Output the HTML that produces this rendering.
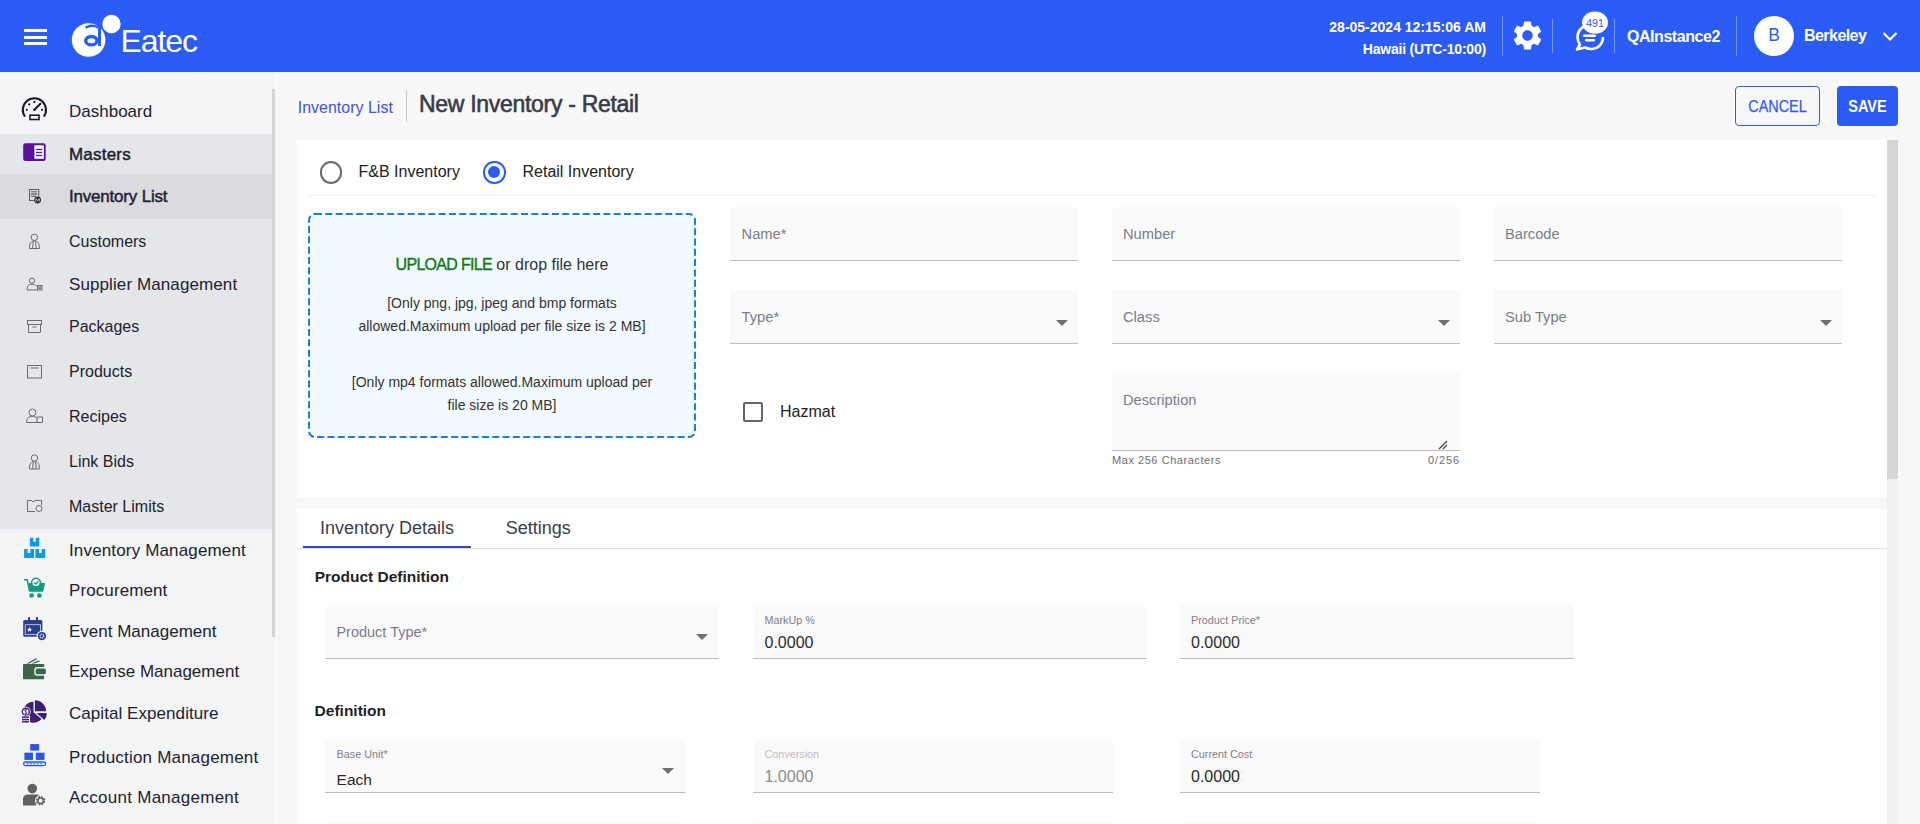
<!DOCTYPE html>
<html><head><meta charset="utf-8">
<style>
*{margin:0;padding:0;box-sizing:border-box}
html,body{width:1920px;height:824px;overflow:hidden;background:#f8f8f8;font-family:"Liberation Sans",sans-serif}
.a{position:absolute;white-space:nowrap}
#hdr{position:absolute;left:0;top:0;width:1920px;height:72px;background:#2c5cf6}
#side{position:absolute;left:0;top:72px;width:275px;height:752px;background:#f3f4f6}
.w{color:#fff}
.vd{position:absolute;width:1px;background:rgba(255,255,255,.35)}
.si{position:absolute;left:69px;font-size:17px;line-height:17px;color:#22222e;white-space:nowrap}
.card{position:absolute;background:#fff}
.fld{position:absolute;background:#fafafa;border-radius:4px 4px 0 0;border-bottom:1px solid #bcbdc3}
.lbl{position:absolute;font-size:14.7px;line-height:15px;color:#7a7d88;white-space:nowrap}
.slbl{position:absolute;font-size:10.8px;line-height:10.8px;color:#7c7f8a;white-space:nowrap}
.val{position:absolute;font-size:16px;line-height:16px;color:#2a2a2a;white-space:nowrap}
.arr{position:absolute;width:0;height:0;border-left:6px solid transparent;border-right:6px solid transparent;border-top:6px solid #707070}
</style></head><body>
<div id="hdr">
  <div class="a" style="left:24px;top:29px;width:23px;height:3px;background:#fff"></div>
  <div class="a" style="left:24px;top:35.5px;width:23px;height:3px;background:#fff"></div>
  <div class="a" style="left:24px;top:42px;width:23px;height:3px;background:#fff"></div>
  <svg class="a" style="left:66px;top:8px" width="60" height="54" viewBox="0 0 60 54">
    <circle cx="22.6" cy="32" r="16.8" fill="#fff"/>
    <circle cx="45.5" cy="16" r="9.2" fill="#fff"/>
    <ellipse cx="25.35" cy="32.7" rx="5.6" ry="4.2" fill="none" stroke="#2c5cf6" stroke-width="3.4"/>
    <rect x="32" y="19.5" width="3" height="18.5" fill="#2c5cf6"/>
    <path d="M19.6 19.8 Q26 15.6 33.8 20.2" fill="none" stroke="#2c5cf6" stroke-width="2.5"/>
  </svg>
  <div class="a w" style="left:120.5px;top:24.8px;font-size:32px;line-height:32px;letter-spacing:-1.1px">Eatec</div>
  <div class="a w" style="right:434px;top:20px;font-size:14px;line-height:14px;font-weight:bold">28-05-2024 12:15:06 AM</div>
  <div class="a w" style="right:434px;top:41.9px;font-size:14px;line-height:14px;font-weight:bold;letter-spacing:-0.2px">Hawaii (UTC-10:00)</div>
  <div class="vd" style="left:1502px;top:16px;height:40px"></div>
  <svg class="a" style="left:1510px;top:18px" width="35" height="35" viewBox="0 0 24 24"><path fill="#fff" d="M19.14,12.94c0.04-0.3,0.06-0.61,0.06-0.94c0-0.32-0.02-0.64-0.07-0.94l2.03-1.58c0.18-0.14,0.23-0.41,0.12-0.61l-1.92-3.32c-0.12-0.22-0.37-0.29-0.59-0.22l-2.39,0.96c-0.5-0.38-1.03-0.7-1.62-0.94L14.4,2.81c-0.04-0.24-0.24-0.41-0.48-0.41h-3.84c-0.24,0-0.43,0.17-0.47,0.41L9.25,5.35C8.66,5.59,8.12,5.92,7.63,6.29L5.24,5.33c-0.22-0.08-0.47,0-0.59,0.22L2.74,8.87C2.62,9.08,2.66,9.34,2.86,9.48l2.03,1.58C4.84,11.36,4.8,11.69,4.8,12s0.02,0.64,0.07,0.94l-2.03,1.58c-0.18,0.14-0.23,0.41-0.12,0.61l1.92,3.32c0.12,0.22,0.37,0.29,0.59,0.22l2.39-0.96c0.5,0.38,1.03,0.7,1.62,0.94l0.36,2.54c0.05,0.24,0.24,0.41,0.48,0.41h3.84c0.24,0,0.44-0.17,0.47-0.41l0.36-2.54c0.59-0.24,1.13-0.56,1.62-0.94l2.39,0.96c0.22,0.08,0.47,0,0.59-0.22l1.92-3.32c0.12-0.22,0.07-0.47-0.12-0.61L19.14,12.94z M12,15.6c-1.98,0-3.6-1.62-3.6-3.6s1.62-3.6,3.6-3.6s3.6,1.62,3.6,3.6S13.98,15.6,12,15.6z"/></svg>
  <div class="vd" style="left:1552px;top:19px;height:34px"></div>
  <svg class="a" style="left:1574px;top:10px" width="40" height="42" viewBox="0 0 40 42">
    <path d="M15.5 15.5 C8 15.5 3.5 21 3.5 27 C3.5 30 4.5 32.5 6 34.5 L3 39.5 L11 37.5 C13 38.5 15 39 17 39 C24 39 29 34 29 27" fill="none" stroke="#fff" stroke-width="2.6" stroke-linejoin="round"/>
    <rect x="9" y="24.5" width="13" height="2.4" rx="1.2" fill="#fff"/>
    <rect x="11" y="29" width="10" height="2.4" rx="1.2" fill="#fff"/>
    <ellipse cx="21" cy="12.6" rx="13" ry="11.2" fill="#fff"/>
    <text x="21" y="16.8" font-family="Liberation Sans" font-size="10.5" fill="#3b55e6" text-anchor="middle">491</text>
  </svg>
  <div class="vd" style="left:1614px;top:19px;height:34px"></div>
  <div class="a w" style="left:1627px;top:29.2px;font-size:16px;line-height:16px;font-weight:bold;letter-spacing:-0.45px">QAInstance2</div>
  <div class="vd" style="left:1736px;top:16px;height:40px"></div>
  <div class="a" style="left:1754px;top:16px;width:40px;height:40px;border-radius:50%;background:#fff"></div>
  <div class="a" style="left:1754px;top:26.8px;width:40px;text-align:center;font-size:17.5px;line-height:17.5px;color:#2c5cf6">B</div>
  <div class="a w" style="left:1804px;top:28.1px;font-size:16px;line-height:16px;font-weight:bold;letter-spacing:-0.55px">Berkeley</div>
  <svg class="a" style="left:1882px;top:31px" width="16" height="11" viewBox="0 0 16 11"><path d="M1.5 2 L8 8.5 L14.5 2" fill="none" stroke="#fff" stroke-width="2.2"/></svg>
</div>

<div id="side">
  <div class="a" style="left:0;top:62px;width:272px;height:40px;background:#e5e6ea"></div>
  <div class="a" style="left:0;top:102px;width:275px;height:45px;background:#dadadf"></div>
  <div class="a" style="left:0;top:147px;width:272px;height:310px;background:#e5e6ea"></div>
  <div class="a" style="left:272px;top:17px;width:3px;height:548px;background:#d6d6d9"></div>
</div>
<div id="sidetext">
  <div class="si" style="top:102.61px;font-size:17px;line-height:17px;letter-spacing:0px;">Dashboard</div>
  <div class="si" style="top:145.91px;font-size:17px;line-height:17px;letter-spacing:0.2px;-webkit-text-stroke:0.45px #22222e;">Masters</div>
  <div class="si" style="top:187.81px;font-size:17px;line-height:17px;letter-spacing:-0.2px;-webkit-text-stroke:0.45px #22222e;">Inventory List</div>
  <div class="si" style="top:234.16px;font-size:16px;line-height:16px;letter-spacing:0px;">Customers</div>
  <div class="si" style="top:275.71px;font-size:17px;line-height:17px;letter-spacing:0.1px;">Supplier Management</div>
  <div class="si" style="top:319.26px;font-size:16px;line-height:16px;letter-spacing:0px;">Packages</div>
  <div class="si" style="top:364.26px;font-size:16px;line-height:16px;letter-spacing:0px;">Products</div>
  <div class="si" style="top:408.96px;font-size:16px;line-height:16px;letter-spacing:0px;">Recipes</div>
  <div class="si" style="top:454.26px;font-size:16px;line-height:16px;letter-spacing:0px;">Link Bids</div>
  <div class="si" style="top:499.26px;font-size:16px;line-height:16px;letter-spacing:0px;">Master Limits</div>
  <div class="si" style="top:541.91px;font-size:17px;line-height:17px;letter-spacing:0.15px;">Inventory Management</div>
  <div class="si" style="top:581.71px;font-size:17px;line-height:17px;letter-spacing:0.1px;">Procurement</div>
  <div class="si" style="top:622.51px;font-size:17px;line-height:17px;letter-spacing:0px;">Event Management</div>
  <div class="si" style="top:662.61px;font-size:17px;line-height:17px;letter-spacing:0px;">Expense Management</div>
  <div class="si" style="top:705.31px;font-size:17px;line-height:17px;letter-spacing:0.06px;">Capital Expenditure</div>
  <div class="si" style="top:748.61px;font-size:17px;line-height:17px;letter-spacing:0.2px;">Production Management</div>
  <div class="si" style="top:788.61px;font-size:17px;line-height:17px;letter-spacing:0.26px;">Account Management</div>
</div>

<!-- main header -->
<div class="a" style="left:297.7px;top:99.5px;font-size:16px;line-height:16px;color:#4353e0">Inventory List</div>
<div class="a" style="left:406px;top:90px;width:1px;height:32px;background:#c9c9c9"></div>
<div class="a" style="left:419px;top:93.1px;font-size:23px;line-height:23px;letter-spacing:-0.3px;-webkit-text-stroke:0.6px #393c4a;color:#393c4a">New Inventory - Retail</div>
<div class="a" style="left:1735px;top:86px;width:85px;height:40px;border:1px solid #2c5cf6;border-radius:4px"></div>
<div class="a" style="left:1735px;top:98.6px;width:85px;text-align:center;font-size:16px;line-height:16px;transform:scaleX(0.9);color:#2c5cf6;-webkit-text-stroke:0.25px #2c5cf6">CANCEL</div>
<div class="a" style="left:1837px;top:86px;width:61px;height:40px;background:#2c5cf6;border-radius:4px"></div>
<div class="a" style="left:1837px;top:98.6px;width:61px;text-align:center;font-size:16px;line-height:16px;font-weight:bold;transform:scaleX(0.91);color:#fff">SAVE</div>

<!-- card 1 -->
<div class="card" style="left:297px;top:140px;width:1590px;height:357px"></div>
<div class="card" style="left:297px;top:509px;width:1590px;height:315px"></div>
<div class="a" style="left:1887px;top:140px;width:11px;height:684px;background:#f0f0f0"></div>
<div class="a" style="left:1887px;top:140px;width:11px;height:339px;background:#d5d5d5"></div>

<div class="a" style="left:319.5px;top:161.2px;width:22.5px;height:22.5px;border:2px solid #6a6a6a;border-radius:50%"></div>
<div class="a" style="left:358.5px;top:164.3px;font-size:16px;line-height:16px;color:#222">F&amp;B Inventory</div>
<div class="a" style="left:483px;top:161.2px;width:22.5px;height:22.5px;border:2px solid #2c5cf6;border-radius:50%"></div>
<div class="a" style="left:488.2px;top:166.4px;width:12px;height:12px;background:#2c5cf6;border-radius:50%"></div>
<div class="a" style="left:522.5px;top:164.3px;font-size:16px;line-height:16px;color:#222">Retail Inventory</div>
<div class="a" style="left:308px;top:195px;width:1567px;height:1px;background:#eeeeee"></div>

<!-- upload -->
<svg class="a" style="left:308px;top:213px" width="388" height="225" viewBox="0 0 388 225">
  <rect x="1" y="1" width="386" height="223" rx="6" ry="6" fill="#f3faff" stroke="#1a7fd6" stroke-width="2" stroke-dasharray="7 3.3"/>
</svg>
<div class="a" style="left:308px;top:256.5px;width:388px;text-align:center;font-size:16px;line-height:16px;color:#333"><span style="color:#157a15;font-size:16px;letter-spacing:-0.7px;-webkit-text-stroke:0.4px #157a15">UPLOAD FILE</span> or drop file here</div>
<div class="a" style="left:308px;top:296.4px;width:388px;text-align:center;font-size:14px;line-height:14px;color:#333">[Only png, jpg, jpeg and bmp formats</div>
<div class="a" style="left:308px;top:318.8px;width:388px;text-align:center;font-size:14px;line-height:14px;color:#333">allowed.Maximum upload per file size is 2 MB]</div>
<div class="a" style="left:308px;top:375px;width:388px;text-align:center;font-size:14px;line-height:14px;color:#333">[Only mp4 formats allowed.Maximum upload per</div>
<div class="a" style="left:308px;top:397.5px;width:388px;text-align:center;font-size:14px;line-height:14px;color:#333">file size is 20 MB]</div>

<!-- fields row1 -->
<div class="fld" style="left:730px;top:207px;width:348px;height:54px"></div>
<div class="fld" style="left:1112px;top:207px;width:348px;height:54px"></div>
<div class="fld" style="left:1494px;top:207px;width:348px;height:54px"></div>
<div class="lbl" style="left:741.6px;top:226.8px">Name*</div>
<div class="lbl" style="left:1123px;top:226.8px">Number</div>
<div class="lbl" style="left:1505px;top:226.8px">Barcode</div>
<!-- row2 -->
<div class="fld" style="left:730px;top:290px;width:348px;height:54px"></div>
<div class="fld" style="left:1112px;top:290px;width:348px;height:54px"></div>
<div class="fld" style="left:1494px;top:290px;width:348px;height:54px"></div>
<div class="lbl" style="left:741.6px;top:309.6px">Type*</div>
<div class="lbl" style="left:1123px;top:309.6px">Class</div>
<div class="lbl" style="left:1505px;top:309.6px">Sub Type</div>
<div class="arr" style="left:1055.5px;top:319.5px"></div>
<div class="arr" style="left:1437.5px;top:319.5px"></div>
<div class="arr" style="left:1819.5px;top:319.5px"></div>
<!-- description -->
<div class="fld" style="left:1112px;top:373px;width:348px;height:78px"></div>
<div class="lbl" style="left:1123px;top:392.7px">Description</div>
<svg class="a" style="left:1436px;top:438px" width="12" height="12" viewBox="0 0 12 12"><path d="M3 11 L11 3 M7 11 L11 7" stroke="#444" stroke-width="1.2"/></svg>
<div class="a" style="left:1112px;top:455px;font-size:11px;line-height:11px;letter-spacing:0.55px;color:#6e6e6e">Max 256 Characters</div>
<div class="a" style="left:1360px;top:455px;width:100px;text-align:right;font-size:11px;line-height:11px;letter-spacing:0.9px;color:#6e6e6e">0/256</div>
<!-- hazmat -->
<div class="a" style="left:743px;top:402px;width:20px;height:20px;border:2px solid #666;border-radius:2px"></div>
<div class="a" style="left:780px;top:403.5px;font-size:16px;line-height:16px;color:#222">Hazmat</div>

<!-- card 2 -->
<div class="a" style="left:297px;top:548px;width:1590px;height:1px;background:#e2e2e2"></div>
<div class="a" style="left:303px;top:546px;width:168px;height:2px;background:#3345b5"></div>
<div class="a" style="left:320px;top:519px;font-size:18px;line-height:18px;color:#3a3d4c">Inventory Details</div>
<div class="a" style="left:505.8px;top:519px;font-size:18px;line-height:18px;color:#3a3d4c">Settings</div>
<div class="a" style="left:314.7px;top:568.6px;font-size:15.5px;line-height:15.5px;font-weight:bold;color:#1f1f27">Product Definition</div>

<div class="fld" style="left:325px;top:605px;width:394px;height:54px"></div>
<div class="lbl" style="left:336.4px;top:624.6px;font-size:14.5px">Product Type*</div>
<div class="arr" style="left:696.3px;top:634.3px"></div>
<div class="fld" style="left:753px;top:605px;width:394px;height:54px"></div>
<div class="slbl" style="left:764.5px;top:614.6px">MarkUp %</div>
<div class="val" style="left:764.5px;top:635px">0.0000</div>
<div class="fld" style="left:1180px;top:605px;width:394px;height:54px"></div>
<div class="slbl" style="left:1191px;top:614.6px">Product Price*</div>
<div class="val" style="left:1191px;top:635px">0.0000</div>

<div class="a" style="left:314.6px;top:702.9px;font-size:15.5px;line-height:15.5px;font-weight:bold;color:#1f1f27">Definition</div>
<div class="fld" style="left:325px;top:739px;width:360px;height:54px"></div>
<div class="slbl" style="left:336.6px;top:748.8px">Base Unit*</div>
<div class="val" style="left:336.6px;top:772px;font-size:15.5px">Each</div>
<div class="arr" style="left:662.2px;top:768.3px"></div>
<div class="fld" style="left:753px;top:739px;width:360px;height:54px"></div>
<div class="slbl" style="left:764.5px;top:748.8px;color:#bdbdc2">Conversion</div>
<div class="val" style="left:764.5px;top:769.3px;color:#8a8a8a">1.0000</div>
<div class="fld" style="left:1180px;top:739px;width:360px;height:54px"></div>
<div class="slbl" style="left:1191px;top:748.8px">Current Cost</div>
<div class="val" style="left:1191px;top:769.3px">0.0000</div>
<div class="fld" style="left:325px;top:822px;width:360px;height:54px"></div>
<div class="fld" style="left:753px;top:822px;width:360px;height:54px"></div>
<div class="fld" style="left:1180px;top:822px;width:360px;height:54px"></div>

<!-- sidebar icons -->
<svg class="a" style="left:0;top:0" width="275" height="824" viewBox="0 0 275 824">
<!-- dashboard gauge -->
<g fill="none" stroke="#1b1b24" stroke-width="2.1">
  <path d="M25 116.6 A11.6 11.6 0 1 1 43.8 116.6"/>
  <rect x="30" y="115.2" width="9" height="4.3" stroke-width="1.6"/>
  <path d="M34.4 109.8 L40.4 103.8" stroke-linecap="round"/>
</g>
<g fill="#1b1b24"><circle cx="26.8" cy="109.8" r="1.1"/><circle cx="29.2" cy="104.4" r="1.1"/><circle cx="34.4" cy="101.9" r="1.1"/><circle cx="42.1" cy="109.8" r="1.1"/><circle cx="34.4" cy="109.8" r="1.3"/></g>
<!-- masters -->
<rect x="23.2" y="143.3" width="22.5" height="17.6" rx="2.2" fill="#5a1199"/>
<rect x="34.4" y="145.3" width="9.4" height="13.5" fill="#fff"/>
<g fill="#5a1199"><rect x="36" y="148.8" width="6.2" height="1.3"/><rect x="36" y="151.8" width="6.2" height="1.3"/><rect x="36" y="154.8" width="6.2" height="1.3"/></g>
<!-- inventory list -->
<g fill="none" stroke="#5a5a66" stroke-width="1">
  <rect x="29.5" y="189.5" width="9.3" height="11"/>
  <path d="M31 191.8 H37 M31 196.3 H36"/>
</g>
<rect x="30.8" y="193" width="6.4" height="2.2" fill="#8a8a92"/>
<circle cx="37.6" cy="200" r="3.4" fill="#2a2a3a"/>
<path d="M35.9 201.6 V198.6 L37.6 200.6 L39.3 198.6 V201.6" fill="none" stroke="#d8d8e0" stroke-width="0.8"/>
<!-- customers / link bids -->
<g fill="none" stroke="#6a6a78" stroke-width="1">
  <circle cx="34.4" cy="237.3" r="3.2"/>
  <path d="M29.4 248.5 C29.4 243 31 241.2 34.4 241.2 C37.8 241.2 39.4 243 39.4 248.5 Z M33.2 241.5 L32.6 248.3 M35.6 241.5 L36.2 248.3"/>
  <circle cx="34.4" cy="458" r="3.2"/>
  <path d="M29.4 469 C29.4 463.5 31 461.7 34.4 461.7 C37.8 461.7 39.4 463.5 39.4 469 Z M33.2 462 L32.6 468.8 M35.6 462 L36.2 468.8"/>
  <!-- supplier -->
  <circle cx="32" cy="280.7" r="2.6"/>
  <path d="M27 290 C27 285.5 29 284.3 32 284.3 C34 284.3 35.5 285 36.5 286 M27 290 H37.5"/>
  <rect x="37.5" y="285.5" width="4.5" height="4.5"/><rect x="39" y="287" width="1.5" height="1.5"/>
  <!-- packages -->
  <rect x="27.5" y="320.5" width="14" height="4"/>
  <path d="M28.5 324.5 V332.5 H40.5 V324.5 M32.5 327 H36.5"/>
  <!-- products -->
  <rect x="27.5" y="365.5" width="14" height="12.5"/>
  <path d="M30.5 368 H38.5"/>
  <!-- recipes -->
  <circle cx="32.5" cy="412.5" r="3.5"/>
  <path d="M26.5 422.5 C26.5 418 28.5 416.5 32.5 416.5 C34.5 416.5 36 417 37 418 M26.5 422.5 H42.5 V417 H37 V422.5"/>
  <!-- master limits -->
  <path d="M35 511.5 H27.5 V500.5 H31.5 L33 502 L34.5 500.5 H41.5 V505"/>
  <circle cx="39" cy="508.5" r="3"/>
</g>
<!-- inventory management -->
<g fill="#1296e8">
  <path d="M29.9 537.8 H33.4 V541.8 H35.8 V537.8 H39.3 V546.6 H29.9 Z"/>
  <path d="M24.1 549 H27.6 V553 H30.4 V549 H34 V558 H24.1 Z"/>
  <path d="M35.4 549 H38.9 V553 H41.7 V549 H45.2 V558 H35.4 Z"/>
</g>
<!-- procurement -->
<path d="M24 579.7 H27.2 L29.6 591.4" fill="none" stroke="#10997c" stroke-width="1.5"/>
<g fill="#10997c">
  <path d="M28.3 583 H31.3 A4.8 4.8 0 0 0 40.5 583 H45.1 L43.1 591.8 H29.8 Z"/>
  <circle cx="31.6" cy="595.5" r="2.3"/><circle cx="39.4" cy="595.5" r="2.3"/>
</g>
<circle cx="36" cy="582.6" r="4.4" fill="none" stroke="#10997c" stroke-width="1.5"/>
<path d="M34 582.6 L35.6 584.1 L38.3 581.3" fill="none" stroke="#10997c" stroke-width="1.3"/>
<!-- event -->
<g fill="#2b3f8e">
  <rect x="23.2" y="620" width="19.2" height="16.8" rx="1.5"/>
  <rect x="28.1" y="617" width="2" height="4" rx="0.8"/><rect x="36" y="617" width="2" height="4" rx="0.8"/>
</g>
<rect x="25.2" y="624.7" width="15.3" height="9.9" fill="#2b3f8e" stroke="#c9ccd8" stroke-width="0.9"/>
<path d="M29.5 627 L30.3 628.7 L32 628.9 L30.7 630 L31.1 631.7 L29.5 630.8 L27.9 631.7 L28.3 630 L27 628.9 L28.7 628.7 Z" fill="#fff"/>
<circle cx="41.9" cy="636.1" r="5.3" fill="#f3f4f6"/>
<circle cx="41.9" cy="636.1" r="4.1" fill="#2b3f8e"/>
<circle cx="41.9" cy="636.1" r="1.9" fill="none" stroke="#e8eaf2" stroke-width="1.3" stroke-dasharray="1.2 0.6"/>
<!-- expense -->
<g fill="#3d654b">
  <rect x="23" y="664" width="21.2" height="15.3" rx="1"/>
  <path d="M26.5 663.5 L36 658.2 L37 659.2 L29 663.5 Z M31 663.5 L39 660.3 L39.8 661.5 L34 663.5 Z"/>
</g>
<rect x="35" y="667.8" width="11.5" height="7.2" rx="2.2" fill="#3d654b" stroke="#f3f4f6" stroke-width="1.4"/>
<!-- capital -->
<g fill="#3d1f70">
  <path d="M33.5 712.3 V701.8 A10.5 10.5 0 1 0 41.5 719.1 Z"/>
  <path d="M34.9 711.3 V700.2 A11.2 11.2 0 0 1 46.1 711.3 Z"/>
  <path d="M36.4 713.1 H46.8 A10.5 10.5 0 0 1 44.4 719.9 Z"/>
</g>
<circle cx="25.8" cy="711.7" r="4.9" fill="#f3f4f6"/>
<circle cx="25.8" cy="711.7" r="3.5" fill="none" stroke="#3d1f70" stroke-width="1.4"/>
<path d="M27 710 Q25.8 709.2 24.8 710 Q24.4 711.3 25.8 711.7 Q27.2 712.2 26.8 713.4 Q25.8 714.2 24.6 713.4 M25.8 708.6 V714.8" fill="none" stroke="#3d1f70" stroke-width="0.7"/>
<rect x="21.5" y="715.6" width="8.6" height="7.4" fill="#f3f4f6"/>
<g fill="#3d1f70"><rect x="22" y="716.4" width="7" height="1.5"/><rect x="22" y="718.8" width="7" height="1.5"/><rect x="22" y="721" width="7" height="1.5"/></g>
<!-- production -->
<g fill="#2c55e2">
  <rect x="30.2" y="744.1" width="9" height="6.5"/>
  <rect x="24.4" y="752.7" width="8.6" height="7.2"/>
  <rect x="35.9" y="752.7" width="8.6" height="7.2"/>
</g>
<rect x="23.6" y="762" width="22" height="3.6" rx="1.8" fill="none" stroke="#2c55e2" stroke-width="1.3"/>
<path d="M26.5 763.8 H43" stroke="#2c55e2" stroke-width="1" stroke-dasharray="2.2 1.2"/>
<!-- account -->
<g fill="#606060">
  <circle cx="32.3" cy="788.6" r="4.8"/>
  <path d="M23 805.5 V799 C23 796 25 794.5 28 794.5 H36.5 C38 794.5 39 795 39.5 795.5 L36 805.5 Z"/>
</g>
<circle cx="40.6" cy="800.7" r="5.6" fill="#f3f4f6"/>
<circle cx="40.6" cy="800.7" r="3.6" fill="none" stroke="#606060" stroke-width="2.2" stroke-dasharray="1.8 1"/>
<circle cx="40.6" cy="800.7" r="2.6" fill="none" stroke="#606060" stroke-width="1.2"/>
</svg>
</body></html>
